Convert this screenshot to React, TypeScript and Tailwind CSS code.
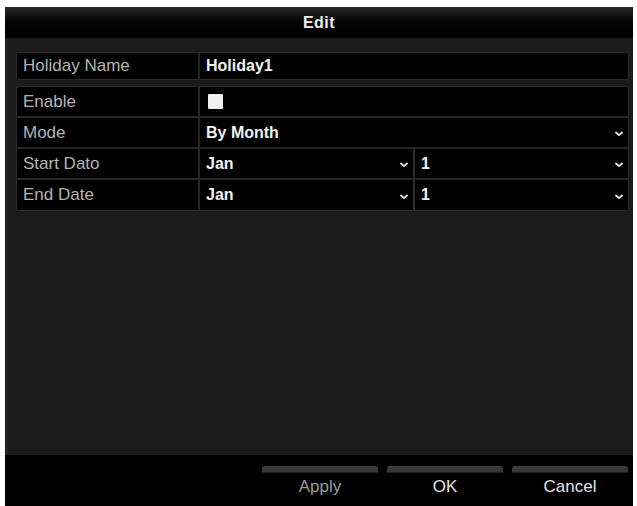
import React from "react";

const Chevron = () => (
  <svg width="8" height="6" viewBox="0 0 8 6" className="shrink-0 mt-[3px]">
    <path d="M1 1.5 L4 4.2 L7 1.5" stroke="#e8e8e8" strokeWidth="1.8" fill="none" strokeLinecap="round" strokeLinejoin="round" />
  </svg>
);

const Label = ({ children }: { children: React.ReactNode }) => (
  <div className="w-[183px] shrink-0 h-full flex items-center pl-[6px] text-[17px] text-[#b4b4b4] border-r-2 border-[#262626]">
    {children}
  </div>
);

const Value = ({ children }: { children: React.ReactNode }) => (
  <span className="text-[16px] font-bold text-[#f2f2f2]">{children}</span>
);

const Select = ({ value, className }: { value: string; className?: string }) => (
  <div className={"h-full flex items-center justify-between pl-[6px] pr-[5px] " + (className ?? "")}>
    <Value>{value}</Value>
    <Chevron />
  </div>
);

export default function App() {
  return (
    <div className="w-[637px] h-[506px] bg-white pt-[7px] pl-[5px] pr-[4px] overflow-hidden" style={{ fontFamily: '"Liberation Sans", Arial, sans-serif' }}>
      <div className="w-[628px] h-[499px] flex flex-col bg-black">
        {/* Title bar */}
        <div className="h-[31px] shrink-0 flex items-center justify-center bg-gradient-to-b from-[#2a2a2a] via-[#050505] to-black">
          <span className="text-[16px] font-bold text-[#f0f0f0] tracking-[0.5px]">Edit</span>
        </div>
        {/* Body */}
        <div className="h-[417px] shrink-0 bg-[#1b1b1b] pt-[14px] pl-[11px] pr-[4px] border-l-[3px] border-[#222]">
          <div className="-ml-[3px] flex flex-col">
            <div className="h-[28px] flex bg-black border border-[#2a2a2a] rounded-[3px]">
              <Label>Holiday Name</Label>
              <div className="flex items-center pl-[6px]">
                <Value>Holiday1</Value>
              </div>
            </div>
            <div className="mt-[6px] flex flex-col bg-black border border-[#2a2a2a] rounded-[3px]">
              <div className="h-[31px] flex border-b-2 border-[#262626]">
                <Label>Enable</Label>
                <div className="flex items-center pl-[8px]">
                  <div className="w-[15px] h-[15px] bg-[#f0f0f0] rounded-[1px]" />
                </div>
              </div>
              <div className="h-[31px] flex border-b-2 border-[#262626]">
                <Label>Mode</Label>
                <Select value="By Month" className="flex-1" />
              </div>
              <div className="h-[31px] flex border-b-2 border-[#262626]">
                <Label>Start Dato</Label>
                <Select value="Jan" className="w-[215px] border-r-2 border-[#2e2e2e]" />
                <Select value="1" className="flex-1" />
              </div>
              <div className="h-[30px] flex">
                <Label>End Date</Label>
                <Select value="Jan" className="w-[215px] border-r-2 border-[#2e2e2e]" />
                <Select value="1" className="flex-1" />
              </div>
            </div>
          </div>
        </div>
        {/* Footer */}
        <div className="flex-1 bg-black flex justify-end gap-[9px] pt-[11px] pr-[5px]">
          {["Apply", "OK", "Cancel"].map((b, i) => (
            <div
              key={b}
              className="w-[116px] h-[40px] rounded-t-[3px] bg-gradient-to-b from-[#3e3e3e] from-[0%] via-[#333] via-[15%] to-black to-[20%] flex items-start justify-center pt-[8px]"
            >
              <span className={"text-[17px] " + (i === 0 ? "text-[#9a9a9a]" : "text-[#e6e6e6]")}>{b}</span>
            </div>
          ))}
        </div>
      </div>
    </div>
  );
}
